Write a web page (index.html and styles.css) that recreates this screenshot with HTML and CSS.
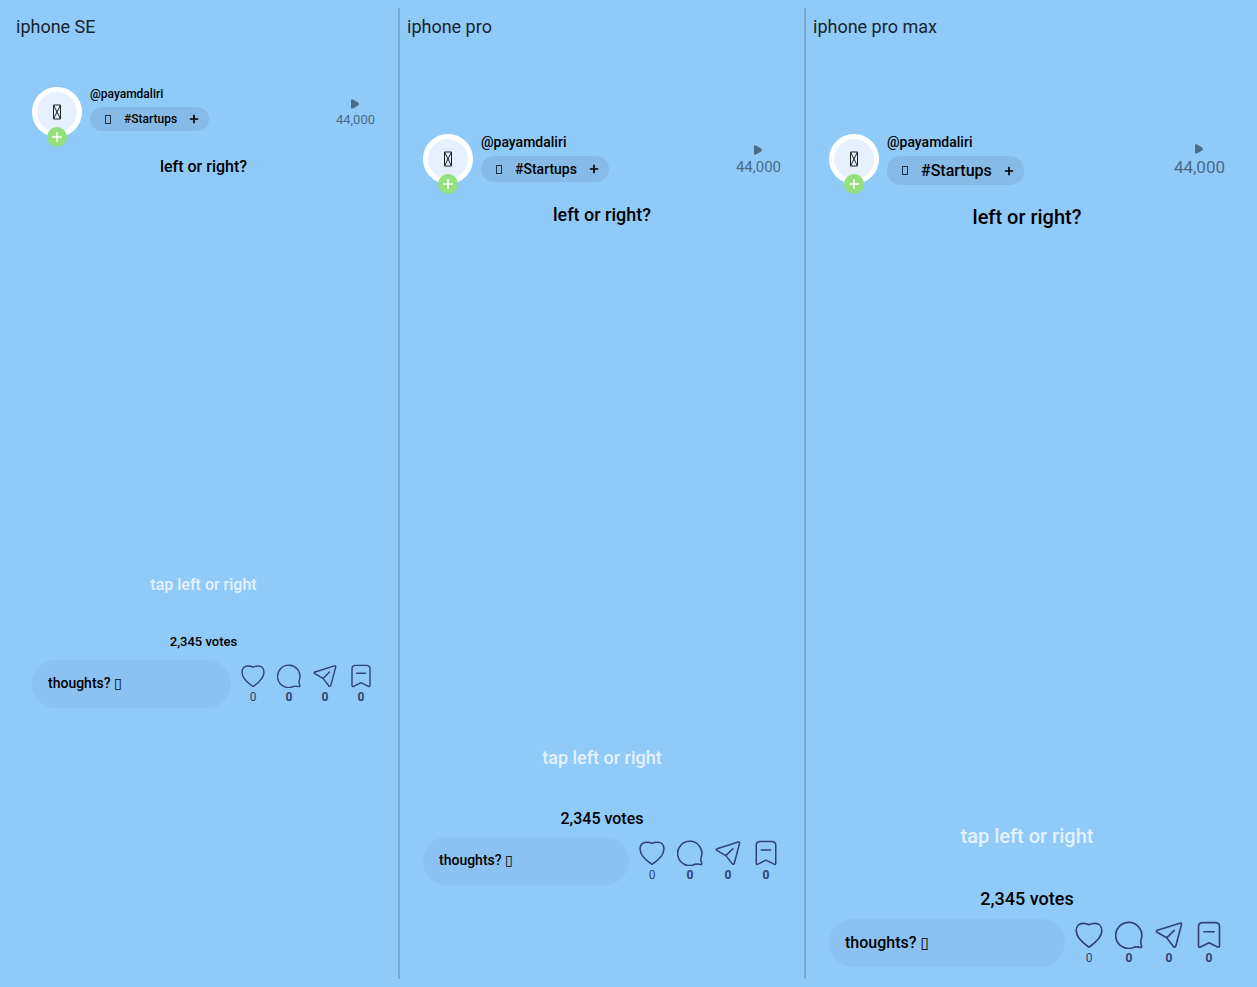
FILE: index.html
```
<!DOCTYPE html>
<html lang="en">
<head>
<meta charset="utf-8">
<meta name="viewport" content="width=device-width, initial-scale=1">
<title>Left or right</title>
<link rel="stylesheet" href="styles.css">
</head>
<body>
<svg class="sprite" aria-hidden="true">
  <symbol id="heart" viewBox="0 0 24 24"><path d="M12 22.5C9.5 20.8 1 14.8 1 8.200 1 4.200 3.600 2 6.700 2c2 0 3.700.2 5.300 1.200C13.600 2.200 15.300 2 17.300 2 20.400 2 23 4.200 23 8.200c0 6.600-8.500 12.600-11 14.300Z"/></symbol>
  <symbol id="comment" viewBox="0 0 24 24"><path d="M22.200 16.400c-.4 1.300-.1 3.100.6 5 .3.900 0 1.300-.9 1.200-1.900-.5-3.500-.6-5.200-.2A11.200 11.200 0 1 1 22.200 16.400Z"/></symbol>
  <symbol id="send" viewBox="0 0 24 24"><path d="M2 8 21.400 1.900c1-.3 1.500.2 1.300 1.200l-4.900 18.300c-.3 1.100-1.400 1.300-2 .4L10 14.400 1.700 9.600C.9 9.100 1.100 8.300 2 8ZM10 14.400l6.500-6.300"/></symbol>
  <symbol id="save" viewBox="0 0 24 24"><path d="M3 4.900c0-2.300 1.300-3.500 3.600-3.500h10.800c2.300 0 3.600 1.200 3.600 3.500v16.500c0 1-.8 1.400-1.600.9L12 18.600l-7.400 3.700c-.8.5-1.600.1-1.600-.9ZM7.600 9.200h8.800"/></symbol>
  <symbol id="plus" viewBox="0 0 12 12"><path d="M6 1v10M1 6h10"/></symbol>
  <symbol id="play" viewBox="0 0 8 10"><path d="M0 1.500C0 .4.900 0 1.800.4l5 2.800c1.500.9 1.500 2.700 0 3.600l-5 2.800C.9 10 0 9.600 0 8.500Z"/></symbol>
  <symbol id="missing" viewBox="0 0 9 16"><path d="M1 1h7v14H1ZM1 1l7 14M8 1 1 15"/></symbol>
</svg>
<main class="devices">
  <section class="device device-se">
    <h2 class="device-name">iphone SE</h2>
    <div class="phone">
      <header class="top">
        <div class="avatar"><svg class="face"><use href="#missing"/></svg><button class="follow" aria-label="Follow"><svg><use href="#plus"/></svg></button></div>
        <div class="author"><a class="handle" href="#">@payamdaliri</a><button class="tag"><span class="box"></span><span>#Startups</span><svg><use href="#plus"/></svg></button></div>
        <div class="views"><svg><use href="#play"/></svg><span>44,000</span></div>
      </header>
      <h1 class="question">left or right?</h1>
      <p class="hint">tap left or right</p>
      <p class="votes">2,345 votes</p>
      <footer class="bottom">
        <input class="thoughts" type="text" aria-label="Thoughts" placeholder="thoughts? ▯">
        <div class="actions">
          <button class="action" aria-label="Like"><svg><use href="#heart"/></svg><span>0</span></button>
          <button class="action" aria-label="Comment"><svg><use href="#comment"/></svg><span>0</span></button>
          <button class="action" aria-label="Share"><svg><use href="#send"/></svg><span>0</span></button>
          <button class="action" aria-label="Save"><svg><use href="#save"/></svg><span>0</span></button>
        </div>
      </footer>
    </div>
  </section>
  <section class="device device-pro">
    <h2 class="device-name">iphone pro</h2>
    <div class="phone">
      <header class="top">
        <div class="avatar"><svg class="face"><use href="#missing"/></svg><button class="follow" aria-label="Follow"><svg><use href="#plus"/></svg></button></div>
        <div class="author"><a class="handle" href="#">@payamdaliri</a><button class="tag"><span class="box"></span><span>#Startups</span><svg><use href="#plus"/></svg></button></div>
        <div class="views"><svg><use href="#play"/></svg><span>44,000</span></div>
      </header>
      <h1 class="question">left or right?</h1>
      <p class="hint">tap left or right</p>
      <p class="votes">2,345 votes</p>
      <footer class="bottom">
        <input class="thoughts" type="text" aria-label="Thoughts" placeholder="thoughts? ▯">
        <div class="actions">
          <button class="action" aria-label="Like"><svg><use href="#heart"/></svg><span>0</span></button>
          <button class="action" aria-label="Comment"><svg><use href="#comment"/></svg><span>0</span></button>
          <button class="action" aria-label="Share"><svg><use href="#send"/></svg><span>0</span></button>
          <button class="action" aria-label="Save"><svg><use href="#save"/></svg><span>0</span></button>
        </div>
      </footer>
    </div>
  </section>
  <section class="device device-max">
    <h2 class="device-name">iphone pro max</h2>
    <div class="phone">
      <header class="top">
        <div class="avatar"><svg class="face"><use href="#missing"/></svg><button class="follow" aria-label="Follow"><svg><use href="#plus"/></svg></button></div>
        <div class="author"><a class="handle" href="#">@payamdaliri</a><button class="tag"><span class="box"></span><span>#Startups</span><svg><use href="#plus"/></svg></button></div>
        <div class="views"><svg><use href="#play"/></svg><span>44,000</span></div>
      </header>
      <h1 class="question">left or right?</h1>
      <p class="hint">tap left or right</p>
      <p class="votes">2,345 votes</p>
      <footer class="bottom">
        <input class="thoughts" type="text" aria-label="Thoughts" placeholder="thoughts? ▯">
        <div class="actions">
          <button class="action" aria-label="Like"><svg><use href="#heart"/></svg><span>0</span></button>
          <button class="action" aria-label="Comment"><svg><use href="#comment"/></svg><span>0</span></button>
          <button class="action" aria-label="Share"><svg><use href="#send"/></svg><span>0</span></button>
          <button class="action" aria-label="Save"><svg><use href="#save"/></svg><span>0</span></button>
        </div>
      </footer>
    </div>
  </section>
</main>
</body>
</html>
```
FILE: styles.css
```
* { box-sizing: border-box; }
body {
  margin: 0;
  padding: 8px;
  background: #90caf9;
  color: #000;
  font-family: Roboto, "DejaVu Sans", sans-serif;
  font-weight: 500;
}
h1, h2, p { margin: 0; }
button { border: 0; padding: 0; background: none; color: inherit; font: inherit; cursor: pointer; }
svg { display: block; flex: none; }
.sprite { position: absolute; width: 0; height: 0; }
.devices {
  display: grid;
  grid-template-columns: 392fr 406fr 443fr;
}
.device { min-width: 0; padding: 8px 7px 0; border-right: 2px solid #78a9d1; }
.device-se { padding-left: 8px; }
.device-max { padding-right: 8px; border-right: 0; }
.device-name {
  height: 39px;
  line-height: 22px;
  font-size: 18px;
  font-weight: 400;
  color: #16242e;
}
.phone { display: flex; flex-direction: column; padding: 32px 16px 12px; }

.device-se {
  --name: 12px; --name-line: 14px; --tag: 12px; --tag-height: 24px;
  --views: 13px; --title: 16px; --title-line: 24px; --votes: 13px; --thoughts: 14px;
  --icon: 24px; --hint-space: 36px; --views-top: 12px;
}
.device-pro {
  --name: 14px; --name-line: 16px; --tag: 14px; --tag-height: 26px;
  --views: 15px; --title: 18px; --title-line: 26px; --votes: 16px; --thoughts: 14px;
  --icon: 26px; --hint-space: 40px; --views-top: 11px;
}
.device-max {
  --name: 14px; --name-line: 16px; --tag: 16px; --tag-height: 29px;
  --views: 17px; --title: 20px; --title-line: 30px; --votes: 18px; --thoughts: 16px;
  --icon: 28px; --hint-space: 42px; --views-top: 10px;
}
.device-se .phone { min-height: 665px; }
.device-pro .phone { min-height: 842px; padding-top: 79px; }
.device-max .phone { min-height: 924px; padding-top: 79px; }

.top { display: flex; align-items: flex-start; gap: 8px; min-height: 68px; }
.avatar {
  position: relative;
  display: grid;
  place-items: center;
  width: 50px;
  height: 50px;
  border: 5px solid #fff;
  border-radius: 50%;
  background: #e6f0ff;
}
.face { width: 10px; height: 16px; fill: none; stroke: #1d2025; stroke-width: 1; }
.follow {
  position: absolute;
  left: 10px;
  top: 35px;
  display: grid;
  place-items: center;
  width: 20px;
  height: 20px;
  border-radius: 50%;
  background: #94e07c;
}
.follow svg { width: 12px; height: 12px; stroke: #fff; stroke-width: 1.5; }
.author { display: flex; flex-direction: column; align-items: flex-start; gap: 6px; }
.handle { color: inherit; text-decoration: none; font-size: var(--name); line-height: var(--name-line); }
.tag {
  display: flex;
  align-items: center;
  gap: 12px;
  height: var(--tag-height);
  padding: 0 10px 0 15px;
  border-radius: 14px;
  background: #87bbe7;
  font-size: var(--tag);
}
.box { width: 6px; height: 9px; margin-right: 1px; border: 1px solid #1d3448; }
.tag svg { width: 10px; height: 10px; stroke: #000; stroke-width: 2; }
.views {
  display: flex;
  flex-direction: column;
  align-items: center;
  gap: 3px;
  margin-left: auto;
  padding-top: var(--views-top);
  color: #4b6c87;
  font-size: var(--views);
  font-weight: 400;
}
.views svg { width: 8px; height: 10px; fill: #4b6c87; }
.question { text-align: center; font-size: var(--title); line-height: var(--title-line); font-weight: 500; }
.hint {
  margin-top: auto;
  padding-bottom: var(--hint-space);
  color: #e3f2fd;
  text-align: center;
  font-size: var(--title);
  line-height: 22px;
}
.votes { text-align: center; font-size: var(--votes); line-height: 20px; margin-bottom: 8px; }
.device-max .votes { margin-bottom: 10px; }
.bottom { display: flex; gap: 10px; }
.thoughts {
  flex: 1;
  min-width: 0;
  height: 48px;
  padding: 0 16px 2px;
  border: 0;
  border-radius: 24px;
  background: #8cc2f1;
  color: #000;
  font: inherit;
  font-size: var(--thoughts);
}
.thoughts::placeholder { color: #000; opacity: 1; }
.actions { display: flex; gap: 12px; padding: 4px 2px 0 0; }
.action {
  display: flex;
  flex-direction: column;
  align-items: center;
  gap: 2px;
  height: 44px;
  color: #2f4372;
  font-size: 12px;
  line-height: 14px;
  font-weight: 700;
}
.action:first-child { font-weight: 400; }
.action svg {
  width: var(--icon);
  height: var(--icon);
  fill: none;
  stroke: #2f4372;
  stroke-width: 1.4;
  stroke-linecap: round;
  stroke-linejoin: round;
}
.device-pro .actions { padding-top: 3px; }
.device-max .actions { padding-top: 2px; }
```
